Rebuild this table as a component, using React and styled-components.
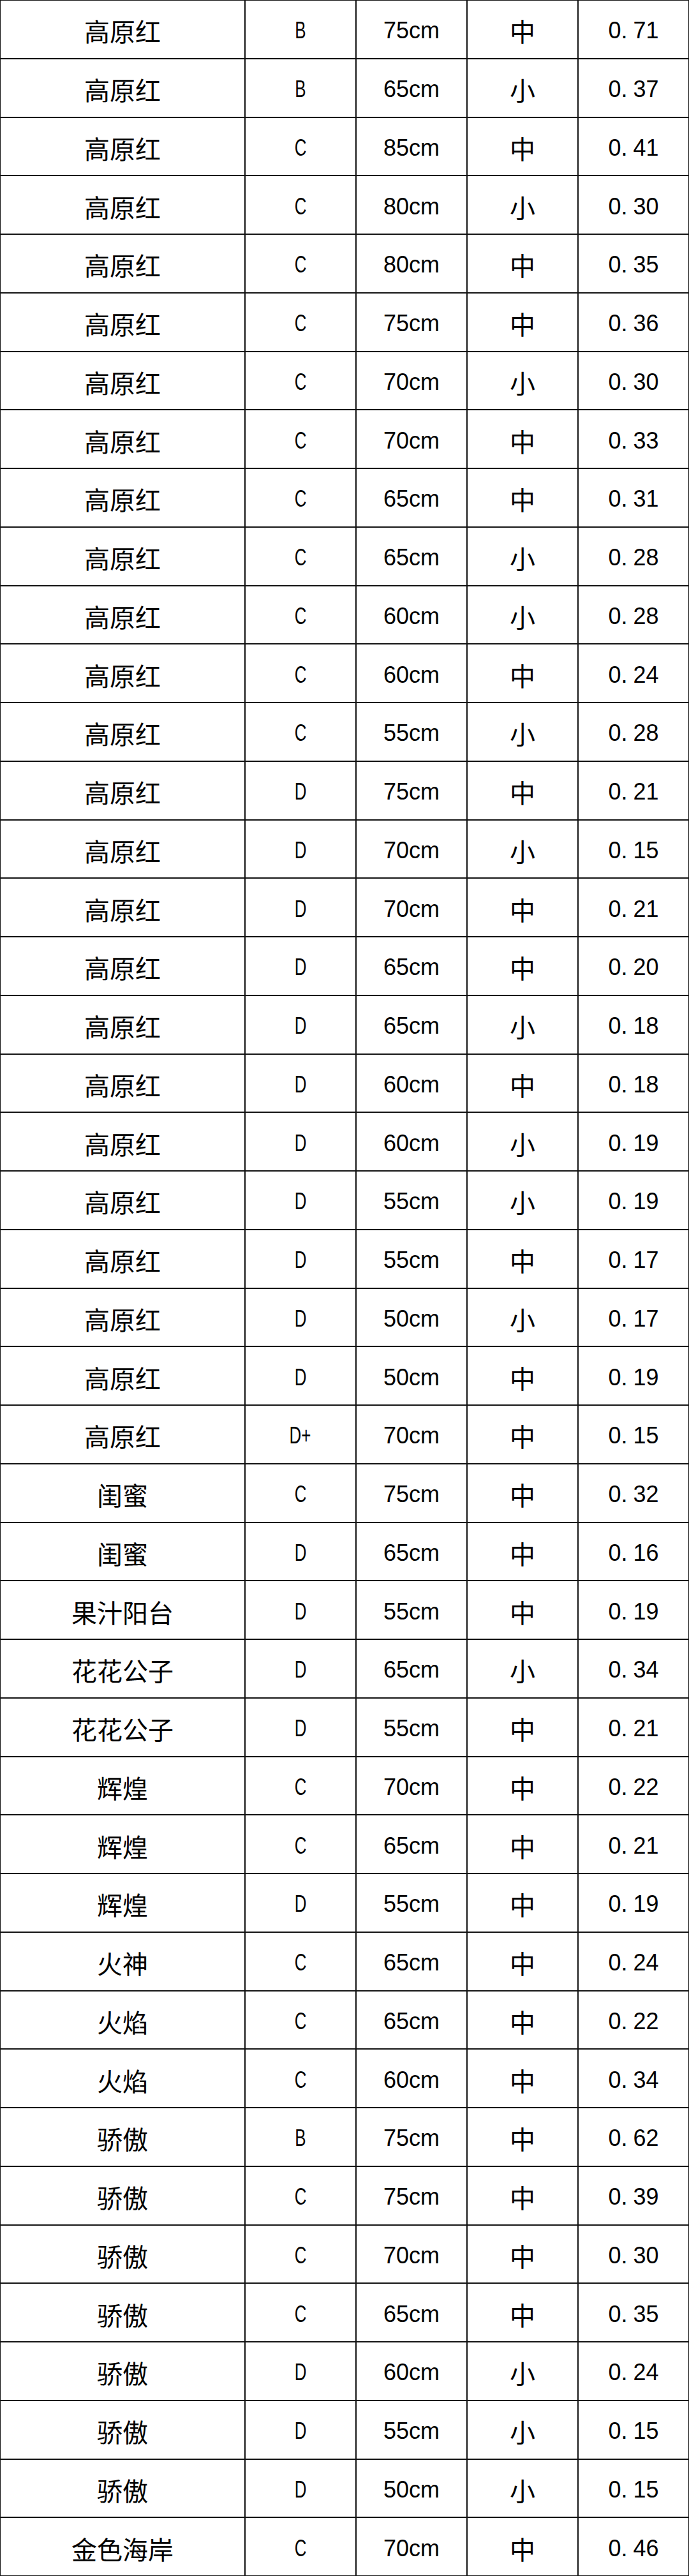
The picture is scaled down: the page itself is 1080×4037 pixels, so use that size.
import React from "react"
import styled, { createGlobalStyle } from "styled-components"

const GlobalStyle = createGlobalStyle`
  html, body {
    margin: 0;
    padding: 0;
    background: #fff;
  }
`

// name, grade, length, size, price
const rows = [
  ["高原红", "B", "75cm", "中", "0.71"],
  ["高原红", "B", "65cm", "小", "0.37"],
  ["高原红", "C", "85cm", "中", "0.41"],
  ["高原红", "C", "80cm", "小", "0.30"],
  ["高原红", "C", "80cm", "中", "0.35"],
  ["高原红", "C", "75cm", "中", "0.36"],
  ["高原红", "C", "70cm", "小", "0.30"],
  ["高原红", "C", "70cm", "中", "0.33"],
  ["高原红", "C", "65cm", "中", "0.31"],
  ["高原红", "C", "65cm", "小", "0.28"],
  ["高原红", "C", "60cm", "小", "0.28"],
  ["高原红", "C", "60cm", "中", "0.24"],
  ["高原红", "C", "55cm", "小", "0.28"],
  ["高原红", "D", "75cm", "中", "0.21"],
  ["高原红", "D", "70cm", "小", "0.15"],
  ["高原红", "D", "70cm", "中", "0.21"],
  ["高原红", "D", "65cm", "中", "0.20"],
  ["高原红", "D", "65cm", "小", "0.18"],
  ["高原红", "D", "60cm", "中", "0.18"],
  ["高原红", "D", "60cm", "小", "0.19"],
  ["高原红", "D", "55cm", "小", "0.19"],
  ["高原红", "D", "55cm", "中", "0.17"],
  ["高原红", "D", "50cm", "小", "0.17"],
  ["高原红", "D", "50cm", "中", "0.19"],
  ["高原红", "D+", "70cm", "中", "0.15"],
  ["闺蜜", "C", "75cm", "中", "0.32"],
  ["闺蜜", "D", "65cm", "中", "0.16"],
  ["果汁阳台", "D", "55cm", "中", "0.19"],
  ["花花公子", "D", "65cm", "小", "0.34"],
  ["花花公子", "D", "55cm", "中", "0.21"],
  ["辉煌", "C", "70cm", "中", "0.22"],
  ["辉煌", "C", "65cm", "中", "0.21"],
  ["辉煌", "D", "55cm", "中", "0.19"],
  ["火神", "C", "65cm", "中", "0.24"],
  ["火焰", "C", "65cm", "中", "0.22"],
  ["火焰", "C", "60cm", "中", "0.34"],
  ["骄傲", "B", "75cm", "中", "0.62"],
  ["骄傲", "C", "75cm", "中", "0.39"],
  ["骄傲", "C", "70cm", "中", "0.30"],
  ["骄傲", "C", "65cm", "中", "0.35"],
  ["骄傲", "D", "60cm", "小", "0.24"],
  ["骄傲", "D", "55cm", "小", "0.15"],
  ["骄傲", "D", "50cm", "小", "0.15"],
  ["金色海岸", "C", "70cm", "中", "0.46"],
]

const Table = styled.div`
  width: 1080px;
  box-sizing: border-box;
  display: grid;
  grid-template-columns: 382px repeat(4, 172px);
  grid-auto-rows: 89.75px;
  gap: 2px;
  padding: 1px;
  background: #111;
`

const Cell = styled.div`
  background: #fff;
  color: #000;
  display: flex;
  align-items: center;
  justify-content: center;
  padding-top: 5px;
  box-sizing: border-box;
  font-family: ${(p) =>
    p.$cjk
      ? `"Noto Sans CJK SC", "Noto Sans", sans-serif`
      : `"Liberation Sans", Arial, sans-serif`};
  font-size: ${(p) => (p.$cjk ? "40px" : "36px")};
  line-height: 1;
`

// grade letters are drawn narrow, like the Latin glyphs of a Hei font
const Grade = styled.span`
  display: inline-block;
  transform: scaleX(0.72);
`

const Dot = styled.span`
  margin-right: 9px;
`

const Price = ({ value }) => {
  const [whole, frac] = value.split(".")
  return (
    <span>
      {whole}
      <Dot>.</Dot>
      {frac}
    </span>
  )
}

export default function App() {
  return (
    <>
      <GlobalStyle />
      <Table>
        {rows.map(([name, grade, length, size, price], i) => (
          <React.Fragment key={i}>
            <Cell $cjk>{name}</Cell>
            <Cell>
              <Grade>{grade}</Grade>
            </Cell>
            <Cell>{length}</Cell>
            <Cell $cjk>{size}</Cell>
            <Cell>
              <Price value={price} />
            </Cell>
          </React.Fragment>
        ))}
      </Table>
    </>
  )
}
